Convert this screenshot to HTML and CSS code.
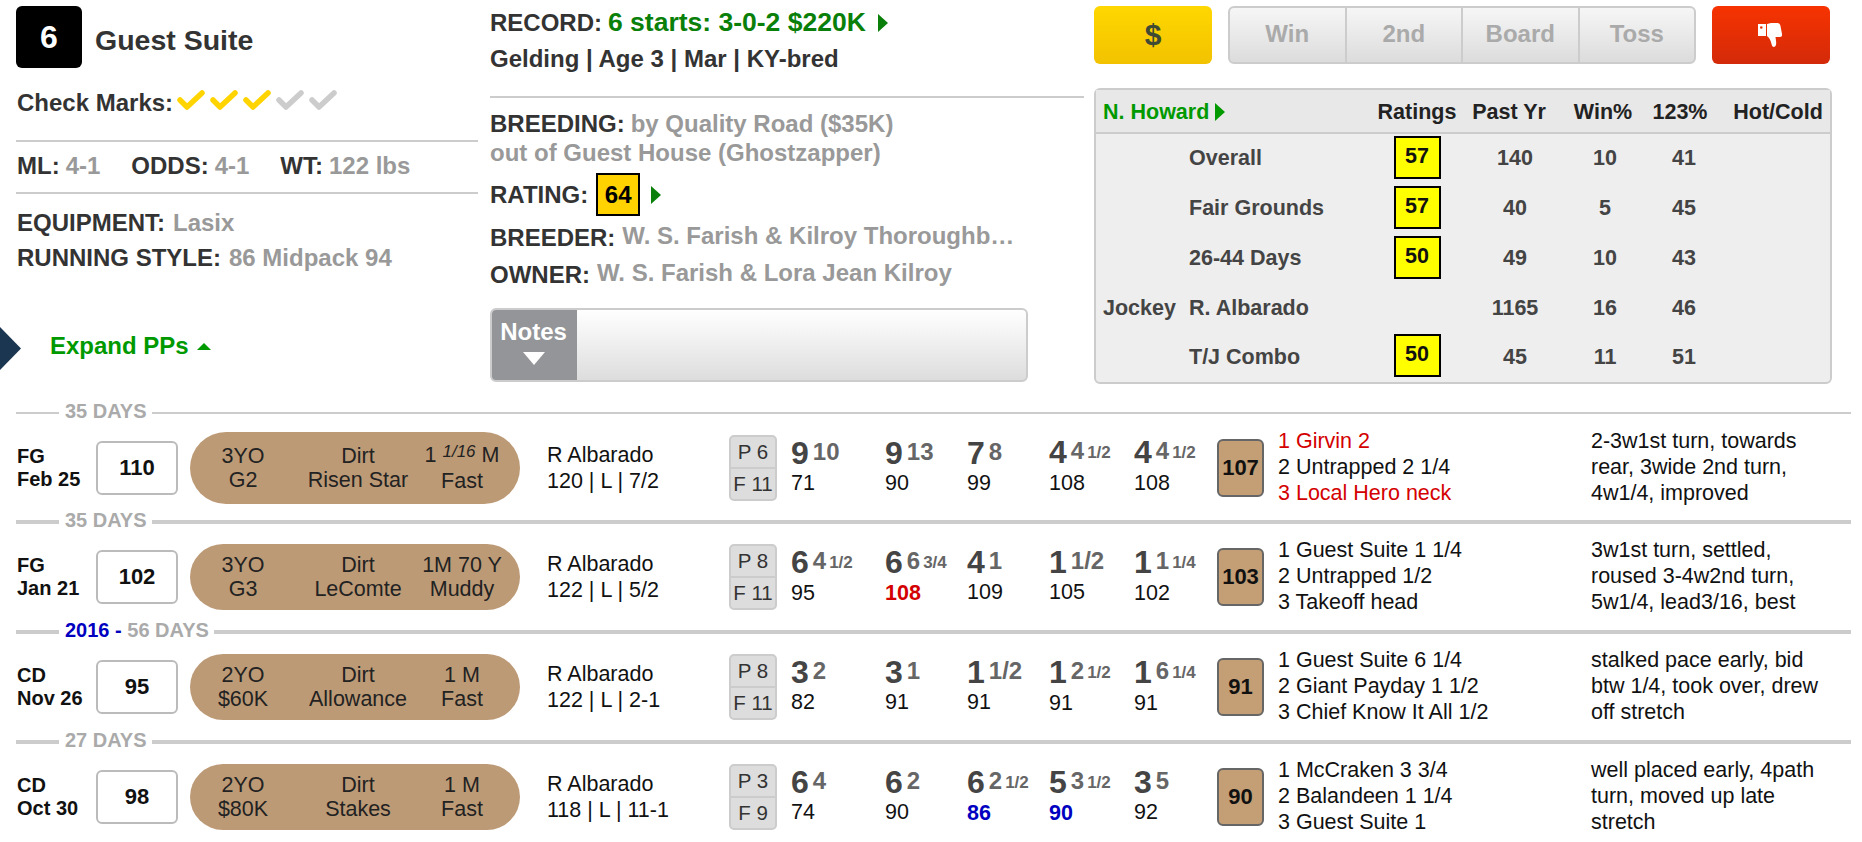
FILE: index.html
```html
<!DOCTYPE html>
<html lang="en">
<head>
  <meta charset="UTF-8" />
  <meta name="viewport" content="width=device-width, initial-scale=1.0"/>
  <title>Guest Suite</title>
  <link rel="stylesheet" href="styles.css">
</head>
<body>
  <div class="top">
    <!-- Horse summary -->
    <div class="col-left">
      <div class="horse-head">
        <div class="horse-num">6</div>
        <h2>Guest Suite</h2>
      </div>
      <div class="checks">
        <span class="label">Check Marks:</span>
        <svg class="check on" viewBox="0 0 28 22"><path d="M3 11l7 7L25 4"/></svg>
        <svg class="check on" viewBox="0 0 28 22"><path d="M3 11l7 7L25 4"/></svg>
        <svg class="check on" viewBox="0 0 28 22"><path d="M3 11l7 7L25 4"/></svg>
        <svg class="check" viewBox="0 0 28 22"><path d="M3 11l7 7L25 4"/></svg>
        <svg class="check" viewBox="0 0 28 22"><path d="M3 11l7 7L25 4"/></svg>
      </div>
      <div class="odds">
        <span><span class="label">ML:</span> <span class="val">4-1</span></span>
        <span><span class="label">ODDS:</span> <span class="val">4-1</span></span>
        <span><span class="label">WT:</span> <span class="val">122 lbs</span></span>
      </div>
      <div class="equip">
        <div><span class="label">EQUIPMENT:</span> <span class="val">Lasix</span></div>
        <div><span class="label">RUNNING STYLE:</span> <span class="val">86 Midpack 94</span></div>
      </div>
      <div class="expand">Expand PPs <span class="caret-up"></span></div>
      <div class="side-tab"></div>
    </div>

    <!-- Record and breeding -->
    <div class="col-mid">
      <div class="line-36"><span class="label">RECORD:</span> <span class="green">6 starts: 3-0-2 $220K</span> <span class="arrow"></span></div>
      <div class="line-36 label">Gelding | Age 3 | Mar | KY-bred</div>
      <div class="breeding">
        <div><span class="label">BREEDING:</span> <span class="val">by Quality Road ($35K)</span></div>
        <div class="val">out of Guest House (Ghostzapper)</div>
      </div>
      <div class="rating">
        <span class="label">RATING:</span>
        <span class="rating-box">64</span>
        <span class="arrow"></span>
      </div>
      <div class="people">
        <span class="label">BREEDER:</span>
        <span class="val person">W. S. Farish &amp; Kilroy Thoroughb…</span>
      </div>
      <div class="people">
        <span class="label">OWNER:</span>
        <span class="val person">W. S. Farish &amp; Lora Jean Kilroy</span>
      </div>
      <div class="notes">
        <div class="notes-tab">Notes<span class="caret-down"></span></div>
      </div>
    </div>

    <!-- Buttons and connections -->
    <div class="col-right">
      <div class="btn-row">
        <div class="btn btn-gold">$</div>
        <div class="btn-group">
          <div class="btn-cell">Win</div>
          <div class="btn-cell">2nd</div>
          <div class="btn-cell">Board</div>
          <div class="btn-cell">Toss</div>
        </div>
        <div class="btn btn-red">
          <svg class="thumb" viewBox="0 0 26 24">
            <path fill-rule="evenodd" d="M0 1h8v12H0zM2 4.500a1.300 1.300 0 1 0 2.600 0a1.300 1.300 0 1 0-2.600 0z"/>
            <path d="M9 1l4-1h6c2 0 3 1 3.500 3l1.500 8c.3 2-.5 3-2 3h-4.500l.5 4c.5 3 0 6-2 6c-1.500 0-2-1-2.500-3c-1-4-2-6-4.500-8z"/>
          </svg>
        </div>
      </div>
      <div class="panel">
        <div class="panel-head">
          <div class="trainer">N. Howard <span class="arrow arrow-sm"></span></div>
          <div class="c">Ratings</div>
          <div class="c th-past">Past Yr</div>
          <div class="c th-win">Win%</div>
          <div class="c th-itm">123%</div>
          <div class="c">Hot/Cold</div>
        </div>
        <div class="panel-body">
          <div></div><div>Overall</div><div class="c"><span class="score">57</span></div><div class="c">140</div><div class="c">10</div><div class="c">41</div><div></div>
          <div></div><div>Fair Grounds</div><div class="c"><span class="score">57</span></div><div class="c">40</div><div class="c">5</div><div class="c">45</div><div></div>
          <div></div><div>26-44 Days</div><div class="c"><span class="score">50</span></div><div class="c">49</div><div class="c">10</div><div class="c">43</div><div></div>
          <div>Jockey</div><div>R. Albarado</div><div></div><div class="c">1165</div><div class="c">16</div><div class="c">46</div><div></div>
          <div></div><div>T/J Combo</div><div class="c"><span class="score">50</span></div><div class="c">45</div><div class="c">11</div><div class="c">51</div><div></div>
        </div>
      </div>
    </div>
  </div>

  <!-- Past performances -->
  <div class="sep sep-first"><span>35 DAYS</span></div>
  <div class="pp-row">
    <div class="track">FG<br>Feb 25</div>
    <div class="cell-box"><div class="speed-box">110</div></div>
    <div class="pill pill-tall">
      <div>3YO<br>G2</div>
      <div>Dirt<br>Risen Star</div>
      <div>1 <i class="dist-frac">1/16</i> M<br>Fast</div>
    </div>
    <div>R Albarado<br>120 | L | 7/2</div>
    <div class="pf"><div>P 6</div><div>F 11</div></div>
    <div class="call"><b>9</b><em>10</em><br>71</div>
    <div class="call"><b>9</b><em>13</em><br>90</div>
    <div class="call"><b>7</b><em>8</em><br>99</div>
    <div class="call"><b>4</b><em>4</em><small>1/2</small><br>108</div>
    <div class="call"><b>4</b><em>4</em><small>1/2</small><br>108</div>
    <div class="fig">107</div>
    <div class="lines"><span class="red">1 Girvin 2</span><br>2 Untrapped 2 1/4<br><span class="red">3 Local Hero neck</span></div>
    <div class="lines">2-3w1st turn, towards<br>rear, 3wide 2nd turn,<br>4w1/4, improved</div>
  </div>

  <div class="sep"><span>35 DAYS</span></div>
  <div class="pp-row">
    <div class="track">FG<br>Jan 21</div>
    <div class="cell-box"><div class="speed-box">102</div></div>
    <div class="pill">
      <div>3YO<br>G3</div>
      <div>Dirt<br>LeComte</div>
      <div>1M 70 Y<br>Muddy</div>
    </div>
    <div>R Albarado<br>122 | L | 5/2</div>
    <div class="pf"><div>P 8</div><div>F 11</div></div>
    <div class="call"><b>6</b><em>4</em><small>1/2</small><br>95</div>
    <div class="call"><b>6</b><em>6</em><small>3/4</small><br><strong class="red">108</strong></div>
    <div class="call"><b>4</b><em>1</em><br>109</div>
    <div class="call"><b>1</b><em>1/2</em><br>105</div>
    <div class="call"><b>1</b><em>1</em><small>1/4</small><br>102</div>
    <div class="fig">103</div>
    <div class="lines">1 Guest Suite 1 1/4<br>2 Untrapped 1/2<br>3 Takeoff head</div>
    <div class="lines">3w1st turn, settled,<br>roused 3-4w2nd turn,<br>5w1/4, lead3/16, best</div>
  </div>

  <div class="sep"><span><span class="year">2016 -</span> 56 DAYS</span></div>
  <div class="pp-row">
    <div class="track">CD<br>Nov 26</div>
    <div class="cell-box"><div class="speed-box">95</div></div>
    <div class="pill">
      <div>2YO<br>$60K</div>
      <div>Dirt<br>Allowance</div>
      <div>1 M<br>Fast</div>
    </div>
    <div>R Albarado<br>122 | L | 2-1</div>
    <div class="pf"><div>P 8</div><div>F 11</div></div>
    <div class="call"><b>3</b><em>2</em><br>82</div>
    <div class="call"><b>3</b><em>1</em><br>91</div>
    <div class="call"><b>1</b><em>1/2</em><br>91</div>
    <div class="call"><b>1</b><em>2</em><small>1/2</small><br>91</div>
    <div class="call"><b>1</b><em>6</em><small>1/4</small><br>91</div>
    <div class="fig">91</div>
    <div class="lines">1 Guest Suite 6 1/4<br>2 Giant Payday 1 1/2<br>3 Chief Know It All 1/2</div>
    <div class="lines">stalked pace early, bid<br>btw 1/4, took over, drew<br>off stretch</div>
  </div>

  <div class="sep"><span>27 DAYS</span></div>
  <div class="pp-row">
    <div class="track">CD<br>Oct 30</div>
    <div class="cell-box"><div class="speed-box">98</div></div>
    <div class="pill">
      <div>2YO<br>$80K</div>
      <div>Dirt<br>Stakes</div>
      <div>1 M<br>Fast</div>
    </div>
    <div>R Albarado<br>118 | L | 11-1</div>
    <div class="pf"><div>P 3</div><div>F 9</div></div>
    <div class="call"><b>6</b><em>4</em><br>74</div>
    <div class="call"><b>6</b><em>2</em><br>90</div>
    <div class="call"><b>6</b><em>2</em><small>1/2</small><br><strong class="blue">86</strong></div>
    <div class="call"><b>5</b><em>3</em><small>1/2</small><br><strong class="blue">90</strong></div>
    <div class="call"><b>3</b><em>5</em><br>92</div>
    <div class="fig">90</div>
    <div class="lines">1 McCraken 3 3/4<br>2 Balandeen 1 1/4<br>3 Guest Suite 1</div>
    <div class="lines">well placed early, 4path<br>turn, moved up late<br>stretch</div>
  </div>
</body>
</html>
```

FILE: styles.css
```css
* {
  margin: 0;
  padding: 0;
  box-sizing: border-box;
}

html, body {
  overflow: hidden;
}

body {
  background: #fff;
  color: #111;
  font-family: 'Liberation Sans', Arial, sans-serif;
  font-size: 21.5px;
  line-height: 26px;
}

.label {
  color: #333;
  font-weight: bold;
  font-size: 24px;
}

.val {
  color: #999;
  font-weight: bold;
  font-size: 24px;
}

.green {
  color: #0a800a;
  font-weight: bold;
  font-size: 26.500px;
  line-height: 1;
}

.red { color: #d40000; }
.blue { color: #0000c0; }

.top {
  display: flex;
  height: 402px;
}

/* Left column */
.col-left {
  position: relative;
  width: 490px;
  padding: 6px 12px 0 16px;
}

.horse-head {
  display: flex;
  align-items: center;
  height: 62px;
}

.horse-num {
  width: 66px;
  height: 62px;
  line-height: 62px;
  background: #000;
  color: #fff;
  border-radius: 6px;
  text-align: center;
  font-size: 32px;
  font-weight: bold;
}

.horse-head h2 {
  margin: 6px 0 0 13px;
  color: #333;
  font-size: 28.500px;
}

.checks {
  display: flex;
  align-items: center;
  height: 30px;
  margin-top: 20px;
  padding-left: 1px;
}

.checks .label {
  margin-right: 4px;
}

.check {
  width: 28px;
  height: 22px;
  margin: -6px 5px 0 0;
  fill: none;
  stroke: #ccc;
  stroke-width: 5.500;
  stroke-linecap: round;
  stroke-linejoin: round;
}

.check.on {
  stroke: #ffd400;
}

.odds {
  display: flex;
  gap: 31px;
  height: 54px;
  margin-top: 22px;
  padding-left: 1px;
  line-height: 48px;
  border-top: 2px solid #ccc;
  border-bottom: 2px solid #ccc;
}

.equip {
  margin-top: 12px;
  padding-left: 1px;
  line-height: 34px;
}

.equip .val {
  margin-left: 2px;
}

.expand {
  margin: 55px 0 0 34px;
  color: #090;
  font-size: 24px;
  font-weight: bold;
  line-height: 30px;
}

.caret-up {
  display: inline-block;
  margin: 0 0 4px 2px;
  border-left: 7px solid transparent;
  border-right: 7px solid transparent;
  border-bottom: 7px solid #090;
}

.side-tab {
  position: absolute;
  left: 0;
  top: 327px;
  width: 21px;
  height: 43px;
  background: #1b3650;
  clip-path: polygon(0 0, 100% 50%, 0 100%);
}

/* Middle column */
.col-mid {
  width: 604px;
  padding: 5px 10px 0 0;
}

.line-36 {
  height: 36px;
  line-height: 36px;
}

.arrow {
  display: inline-block;
  margin-left: 6px;
  border-top: 9px solid transparent;
  border-bottom: 9px solid transparent;
  border-left: 10px solid #0a800a;
  vertical-align: -1px;
}

.arrow-sm {
  margin-left: 0;
  border-left-color: #090;
  vertical-align: -2px;
}

.breeding {
  margin-top: 19px;
  padding-top: 12px;
  border-top: 2px solid #ccc;
  line-height: 27px;
}

.rating {
  display: flex;
  align-items: center;
  margin: 7px 0 3px;
}

.rating-box {
  width: 44px;
  height: 43px;
  margin-left: 8px;
  background: #ffd200;
  border: 2px solid #000;
  color: #000;
  font-size: 24px;
  font-weight: bold;
  line-height: 39px;
  text-align: center;
}

.rating .arrow {
  margin-left: 11px;
}

.people {
  display: flex;
  gap: 7px;
  height: 37px;
  line-height: 38px;
}

.person {
  white-space: nowrap;
  line-height: 34px;
}

.notes {
  display: flex;
  width: 538px;
  height: 74px;
  margin-top: 15px;
  background: linear-gradient(#fff, #ddd);
  border: 2px solid #ccc;
  border-radius: 6px;
  overflow: hidden;
}

.notes-tab {
  width: 87px;
  margin: -2px 0 -2px -2px;
  padding-top: 9px;
  background: #939598;
  color: #fff;
  font-size: 24px;
  font-weight: bold;
  line-height: 30px;
  text-align: center;
}

.caret-down {
  display: block;
  width: 0;
  margin: 5px auto 0;
  border-left: 11px solid transparent;
  border-right: 11px solid transparent;
  border-top: 13px solid #fff;
}

/* Right column */
.col-right {
  padding-top: 6px;
}

.btn-row {
  display: flex;
  gap: 16px;
  height: 58px;
}

.btn {
  display: flex;
  align-items: center;
  justify-content: center;
  width: 118px;
  border-radius: 6px;
}

.btn-gold {
  background: linear-gradient(#ffd700, #f2c200);
  color: #3f4a35;
  font-size: 30px;
  font-weight: bold;
}

.btn-red {
  background: linear-gradient(#f73300, #d32a0a);
}

.thumb {
  width: 26px;
  height: 24px;
  fill: #fff;
}

.btn-group {
  display: flex;
  width: 468px;
  background: linear-gradient(#f6f6f6, #dcdcdc);
  border: 2px solid #ccc;
  border-radius: 6px;
}

.btn-cell {
  flex: 1;
  color: #aaa;
  font-size: 24px;
  font-weight: bold;
  line-height: 52px;
  text-align: center;
  border-left: 2px solid #ccc;
}

.btn-cell:first-child {
  border-left: none;
}

.panel {
  width: 738px;
  height: 296px;
  margin-top: 24px;
  background: #eee;
  border: 2px solid #ccc;
  border-radius: 6px;
  font-weight: bold;
  color: #444;
}

.panel-head,
.panel-body {
  display: grid;
  padding-left: 7px;
  align-items: center;
}

.panel-head {
  height: 44px;
  padding-top: 2px;
  grid-template-columns: 268px 92px 104px 76px 82px 106px;
  background: #e8e8e8;
  border-bottom: 2px solid #ccc;
  color: #222;
}

.panel-body {
  grid-template-columns: 86px 182px 92px 104px 76px 82px 106px;
  grid-template-rows: 50px 50px 50px 50px 47px;
  margin-top: -1px;
}

.c {
  text-align: center;
  white-space: nowrap;
}

.th-past { padding-right: 12px; }
.th-win { padding-right: 4px; }
.th-itm { padding-right: 8px; }

.trainer {
  color: #090;
}

.score {
  display: block;
  width: 47px;
  height: 43px;
  margin: -2px auto 0;
  background: #ff0;
  border: 2px solid #000;
  color: #111;
  line-height: 36px;
}

/* PP rows */
.sep {
  display: flex;
  align-items: center;
  height: 22px;
  padding-left: 16px;
  width: 1851px;
  color: #aaa;
  font-size: 20px;
  font-weight: bold;
}

.sep > span {
  padding-bottom: 4px;
}

.sep::before,
.sep::after {
  content: '';
  height: 4px;
  background: #ccc;
}

.sep::before {
  width: 43px;
  margin-right: 6px;
}

.sep::after {
  flex: 1;
  margin-left: 5px;
}

.sep-first::before,
.sep-first::after {
  height: 2px;
}

.year {
  color: #0000c0;
}

.pp-row {
  display: grid;
  grid-template-columns: 80px 94px 357px 182px 62px 94px 82px 82px 85px 83px 61px 313px 260px;
  align-items: center;
  height: 88px;
  padding-left: 16px;
}

.pp-row:nth-of-type(3) {
  height: 87px;
}

.track {
  padding-left: 1px;
  font-size: 20px;
  font-weight: bold;
  line-height: 23px;
  white-space: nowrap;
}

.speed-box {
  width: 82px;
  height: 54px;
  background: #fff;
  border: 2px solid #bbb;
  border-radius: 6px;
  font-size: 22px;
  font-weight: bold;
  line-height: 50px;
  text-align: center;
}

.pill {
  display: grid;
  grid-template-columns: 106px 124px 84px;
  align-items: center;
  width: 330px;
  height: 66px;
  background: #bd9a76;
  border-radius: 36px;
  color: #222;
  line-height: 24px;
  text-align: center;
  white-space: nowrap;
}

.pill-tall {
  height: 72px;
}

.dist-frac {
  position: relative;
  top: -5px;
  font-size: 17px;
}

.pf {
  width: 48px;
  background: #ddd;
  border: 2px solid #ccc;
  border-radius: 5px;
  color: #333;
  font-size: 20.500px;
  line-height: 30px;
  text-align: center;
}

.pf div + div {
  border-top: 2px solid #ccc;
}

.call {
  line-height: 27px;
  white-space: nowrap;
}

.call b {
  position: relative;
  top: 1px;
  color: #444;
  font-size: 32px;
  margin-right: 4px;
}

.call em {
  color: #666;
  font-size: 24px;
  font-style: normal;
  font-weight: bold;
  position: relative;
  top: -3px;
  margin-right: 3px;
}

.call small {
  color: #666;
  font-size: 17px;
  font-weight: bold;
  position: relative;
  top: -4px;
}

.fig {
  width: 47px;
  height: 58px;
  background: #c49e74;
  border: 2px solid #666;
  border-radius: 6px;
  font-size: 22px;
  font-weight: bold;
  line-height: 54px;
  text-align: center;
}

.lines {
  padding-bottom: 2px;
  white-space: nowrap;
}
```
